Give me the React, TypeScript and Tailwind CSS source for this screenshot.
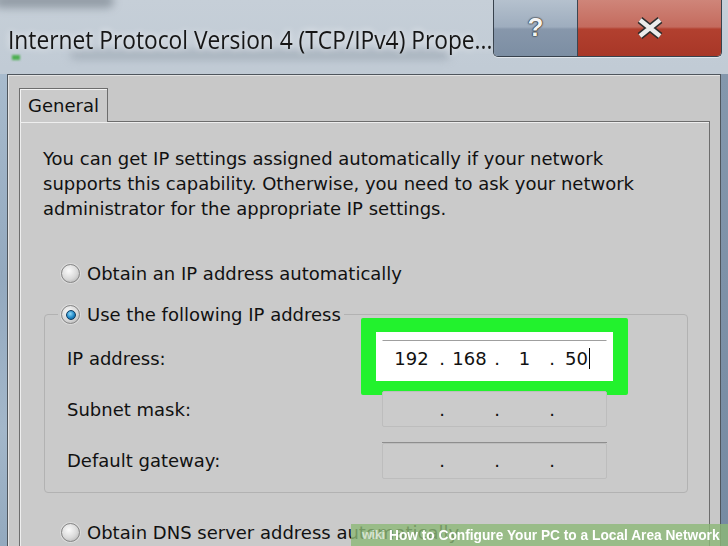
import React from 'react';

const body = "font-['DejaVu_Sans','Liberation_Sans',sans-serif]";

function Radio({ checked = false }: { checked?: boolean }) {
    return (
        <span className="flex h-[19px] w-[19px] shrink-0 items-center justify-center rounded-full border border-[#878787] bg-[radial-gradient(circle_at_40%_35%,#fbfbfb,#d9d9d9_55%,#a8a8a8)] shadow-[0_0_0_1px_rgba(255,255,255,0.35)]">
            {checked && (
                <span className="h-[10px] w-[10px] rounded-full border border-[#0d3b60] bg-[radial-gradient(circle_at_40%_35%,#8fd8f7,#2089c8_55%,#0a4a7e)]" />
            )}
        </span>
    );
}

function IpField({ values, active = false }: { values?: string[]; active?: boolean }) {
    const v = values ?? ['', '', '', ''];
    const dot = <span className="flex w-[4px] justify-center">.</span>;
    return (
        <div
            className={
                active
                    ? 'relative flex h-[36px] w-[225px] items-center border border-white border-t-[#9f9f9f] bg-white text-[18px] text-[#111]'
                    : 'relative flex h-[36px] w-[225px] items-center rounded-[2px] border border-[#bdbdbd] bg-[#cbcbcb] text-[18px] text-[#111]'
            }
        >
            <span className="flex w-[57px] justify-center">{v[0]}</span>
            {dot}
            <span className="flex w-[51px] justify-center">{v[1]}</span>
            {dot}
            <span className="flex w-[51px] justify-center">{v[2]}</span>
            {dot}
            <span className="flex flex-1 items-center pl-[11px]">
                {v[3]}
                {active && <span className="ml-[1px] h-[21px] w-[1px] bg-black" />}
            </span>
        </div>
    );
}

export default function App() {
    return (
        <div className="relative h-[546px] w-[728px] overflow-hidden bg-[linear-gradient(180deg,#c6cfd8_0%,#bcc7d2_25%,#b3c1cf_55%,#a8b8c8_100%)]">
            {/* blurred window behind the glass */}
            <div className="pointer-events-none absolute left-[-6px] top-[-6px] h-[14px] w-[120px] rounded-full bg-[#7d8791] opacity-70 blur-[4px]" />
            <div className="pointer-events-none absolute left-[12px] top-[55px] h-[5px] w-[8px] bg-[#4caf50] blur-[1px]" />
            <div className="pointer-events-none absolute left-[70px] top-[50px] h-[10px] w-[380px] rounded-full bg-[#8f9aa6] opacity-50 blur-[4px]" />

            {/* title bar */}
            <div className="relative flex h-[74px]">
                <div className="min-w-0 flex-1 pl-[8px] pt-[24px]">
                    <span className="inline-block origin-left scale-x-[0.875] whitespace-nowrap font-['Open_Sans',sans-serif] text-[26px] leading-[30px] text-[#161616] [text-shadow:0_0_8px_rgba(255,255,255,0.9)]">
                        Internet Protocol Version 4 (TCP/IPv4) Prope...
                    </span>
                </div>
                <div className="mr-[6px] flex h-[57px] rounded-b-[5px] border border-t-0 border-[#38424d] shadow-[0_1px_0_rgba(255,255,255,0.5)]">
                    <div className="flex w-[84px] items-center justify-center rounded-bl-[4px] border-r border-[#3b4652] bg-[linear-gradient(180deg,#b5c1ce_0%,#9eadbe_48%,#8797ab_52%,#7c8ea3_100%)] pb-[2px] font-['Liberation_Sans',sans-serif] text-[26px] font-bold text-[#f4f4f4] [text-shadow:0_0_1px_#222,0_0_1px_#222,0_0_2px_#222]">
                        ?
                    </div>
                    <div className="flex w-[143px] items-center justify-center rounded-br-[4px] bg-[linear-gradient(180deg,#cf8579_0%,#c46b5e_48%,#b2402f_52%,#a83727_100%)]">
                        <svg width="30" height="22" viewBox="0 0 30 22">
                            <path d="M5 3 L25 19 M25 3 L5 19" stroke="#2c2c2c" strokeWidth="7.5" />
                            <path d="M5 3 L25 19 M25 3 L5 19" stroke="#ececec" strokeWidth="4.5" />
                        </svg>
                    </div>
                </div>
            </div>

            {/* dialog body */}
            <div className="flex">
                <div className="w-[7px] shrink-0 bg-[linear-gradient(180deg,#a8bbcd,#93a9bf_40%,#a3b7ca_70%,#8ea5bb)]" />
                <div className={`w-[714px] shrink-0 border border-b-0 border-[#4f565d] bg-[#c8c8c8] pl-[11px] pt-[13px] shadow-[inset_1px_1px_0_#e4e4e4] ${body}`}>
                    <div className="relative z-10 -mb-px flex h-[34px] w-[89px] items-center border border-b-0 border-[#6d6d6d] bg-[#cacaca] pl-[8px] text-[18px] text-[#111] shadow-[inset_1px_1px_0_#f3f3f3]">
                        General
                    </div>
                    <div className="h-[460px] w-[691px] border border-[#6d6d6d] bg-[#cacaca] pl-[23px] pt-[24px] text-[18px] leading-[25px] text-[#111] shadow-[inset_1px_1px_0_#eeeeee]">
                        <p>
                            You can get IP settings assigned automatically if your network
                            <br />
                            supports this capability. Otherwise, you need to ask your network
                            <br />
                            administrator for the appropriate IP settings.
                        </p>

                        <div className="ml-[18px] mt-[40px] flex h-[25px] items-center gap-[7px]">
                            <Radio />
                            <span>Obtain an IP address automatically</span>
                        </div>

                        <fieldset className="ml-[1px] mt-[16px] w-[644px] rounded-[4px] border border-[#b2b2b2]">
                            <legend className="ml-[13px] px-[3px]">
                                <div className="flex h-[25px] items-center gap-[7px]">
                                    <Radio checked />
                                    <span>Use the following IP address</span>
                                </div>
                            </legend>
                            <div className="flex flex-col gap-[15px] pb-[14px] pt-[13px]">
                                <div className="flex h-[36px] items-center">
                                    <span className="w-[337px] pl-[22px]">IP address:</span>
                                    <div className="relative">
                                        <div className="absolute left-[-21px] top-[-22px] h-[77px] w-[267px] rounded-[2px] border-x-[15px] border-y-[14px] border-[#22f22d] bg-white" />
                                        <IpField active values={['192', '168', '1', '50']} />
                                    </div>
                                </div>
                                <div className="flex h-[36px] items-center">
                                    <span className="w-[337px] pl-[22px]">Subnet mask:</span>
                                    <IpField />
                                </div>
                                <div className="flex h-[36px] items-center">
                                    <span className="w-[337px] pl-[22px]">Default gateway:</span>
                                    <div className="border-t border-[#8e8e8e]">
                                        <IpField />
                                    </div>
                                </div>
                            </div>
                        </fieldset>

                        <div className="ml-[18px] mt-[27px] flex h-[25px] items-center gap-[7px]">
                            <Radio />
                            <span>Obtain DNS server address automatically</span>
                        </div>
                    </div>
                </div>
                <div className="flex-1 bg-[linear-gradient(180deg,#8497ac,#7489a1)]" />
            </div>

            {/* wikiHow watermark */}
            <div className="absolute bottom-0 right-0 flex h-[22px] w-[377px] items-center bg-[#8cb877]/80 pl-[11px] font-['Liberation_Sans',sans-serif] text-white">
                <span className="text-[13px] font-bold tracking-[-0.5px] text-[#e8efe3]/80">wiki</span>
                <span className="ml-[4px] inline-block origin-left scale-x-[0.98] whitespace-nowrap text-[14px] font-bold">
                    How to Configure Your PC to a Local Area Network
                </span>
            </div>
        </div>
    );
}
